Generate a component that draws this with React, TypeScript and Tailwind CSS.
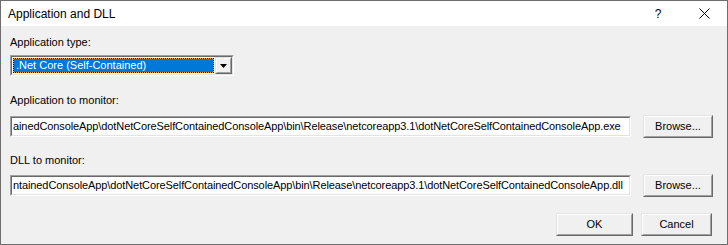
import React from 'react';

const font = { fontFamily: '"Liberation Sans", Arial, sans-serif' };

const Sunken: React.FC<{ className?: string; children: React.ReactNode }> = ({ className = '', children }) => (
  <div className={`border border-t-[#a0a0a0] border-l-[#a0a0a0] border-b-white border-r-white ${className}`}>
    <div className="h-full border border-t-[#696969] border-l-[#696969] border-b-[#e3e3e3] border-r-[#e3e3e3]">
      {children}
    </div>
  </div>
);

const Button: React.FC<{ label: string; className?: string }> = ({ label, className = '' }) => (
  <div className={`h-[23px] border border-t-[#e3e3e3] border-l-[#e3e3e3] border-b-[#696969] border-r-[#696969] ${className}`}>
    <div className="h-full flex items-center justify-center border border-t-white border-l-white border-b-[#a0a0a0] border-r-[#a0a0a0] bg-[#f0f0f0] text-[11px] text-black">
      {label}
    </div>
  </div>
);

// the edit box is scrolled to the end, so only the tail of the path shows
const PathField: React.FC<{ value: string }> = ({ value }) => (
  <Sunken className="w-[621px] h-[21px] bg-white">
    <div className="h-full bg-white flex items-center overflow-hidden pl-[1px]">
      <span className="whitespace-nowrap text-[11px] tracking-[-0.1px] text-black leading-[13px]">{value}</span>
    </div>
  </Sunken>
);

const exePath =
  'ainedConsoleApp\\dotNetCoreSelfContainedConsoleApp\\bin\\Release\\netcoreapp3.1\\dotNetCoreSelfContainedConsoleApp.exe';
const dllPath =
  'ntainedConsoleApp\\dotNetCoreSelfContainedConsoleApp\\bin\\Release\\netcoreapp3.1\\dotNetCoreSelfContainedConsoleApp.dll';

export default function App() {
  return (
    <div style={font} className="w-[728px] h-[245px] border border-[#6f6f6f] bg-[#f0f0f0] flex flex-col overflow-hidden">
      {/* title bar */}
      <div className="h-[25px] bg-white flex items-center pl-[7px] shrink-0">
        <span className="text-[12px] text-black flex-1">Application and DLL</span>
        <span className="text-[12px] text-black w-[46px] text-center">?</span>
        <div className="w-[46px] flex justify-center">
          <svg width="11" height="11" viewBox="0 0 11 11">
            <path d="M0.5 0.5 L10.5 10.5 M10.5 0.5 L0.5 10.5" stroke="#000" strokeWidth="1" fill="none" />
          </svg>
        </div>
      </div>

      {/* body */}
      <div className="flex-1 pl-[9px] pt-[10px] text-[11px] leading-[13px] text-black">
        <div>Application type:</div>

        <Sunken className="mt-[6px] w-[224px] h-[21px] bg-white">
          <div className="h-full bg-white flex">
            <div className="flex-1 p-[1px]">
              <div className="h-full border border-dotted border-black bg-[#f5a142]">
                <div className="h-full bg-[#0078d7] text-white flex items-center pl-[2px]">
                  .Net Core (Self-Contained)
                </div>
              </div>
            </div>
            <div className="w-[17px] border border-t-[#e3e3e3] border-l-[#e3e3e3] border-b-[#696969] border-r-[#696969]">
              <div className="h-full flex items-center justify-center border border-t-white border-l-white border-b-[#a0a0a0] border-r-[#a0a0a0] bg-[#f0f0f0]">
                <svg width="7" height="4" viewBox="0 0 7 4">
                  <path d="M0 0 H7 L3.5 4 Z" fill="#000" />
                </svg>
              </div>
            </div>
          </div>
        </Sunken>

        <div className="mt-[18px]">Application to monitor:</div>
        <div className="mt-[8px] flex items-center">
          <PathField value={exePath} />
          <Button label="Browse..." className="ml-[12px] w-[70px]" />
        </div>

        <div className="mt-[16px]">DLL to monitor:</div>
        <div className="mt-[7px] flex items-center">
          <PathField value={dllPath} />
          <Button label="Browse..." className="ml-[12px] w-[70px]" />
        </div>

        <div className="mt-[16px] flex justify-end pr-[15px] gap-[8px]">
          <Button label="OK" className="w-[77px]" />
          <Button label="Cancel" className="w-[71px]" />
        </div>
      </div>
    </div>
  );
}
